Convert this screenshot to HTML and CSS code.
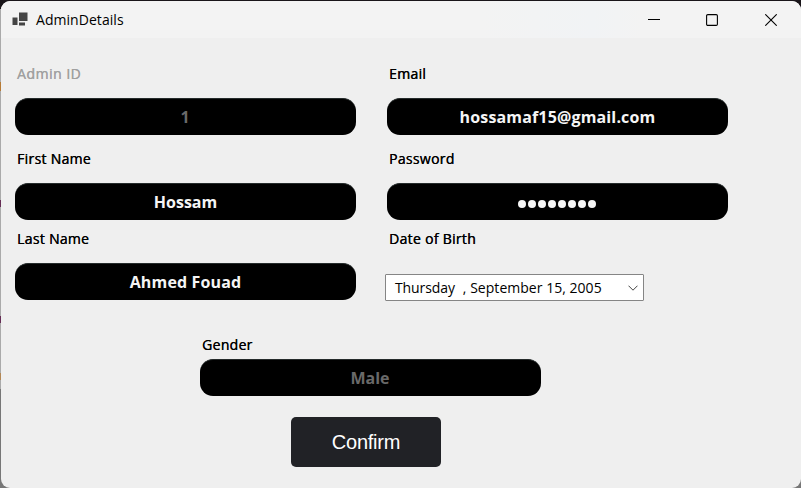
FILE: index.html
```html
<!DOCTYPE html>
<html lang="en">
<head>
<meta charset="utf-8">
<title>AdminDetails</title>
<link rel="stylesheet" href="styles.css">
</head>
<body>
<main class="window">
  <header class="titlebar">
    <svg class="app-icon" width="16" height="16" viewBox="0 0 16 16"><path d="M7 .5h8.500v8.500H7zM.5 5.500h5v7.500h-5zM7 10.500h6v3H7z" fill="#454545"/></svg>
    <span class="title">AdminDetails</span>
    <div class="controls">
      <svg width="12" height="12" viewBox="0 0 12 12"><path d="M0 5.500h12"/></svg>
      <svg width="12" height="12" viewBox="0 0 12 12"><rect x=".6" y=".6" width="10.800" height="10.800" rx="1.200"/></svg>
      <svg width="12" height="12" viewBox="0 0 12 12"><path d="M.3.3l11.400 11.400M11.700.3L.3 11.700"/></svg>
    </div>
  </header>
  <form class="form">
    <div class="columns">
      <div class="field"><span class="label muted">Admin ID</span><div class="input dim">1</div></div>
      <div class="field"><span class="label">Email</span><div class="input wide">hossamaf15@gmail.com</div></div>
      <div class="field"><span class="label">First Name</span><div class="input">Hossam</div></div>
      <div class="field"><span class="label">Password</span><div class="input dots"><i></i><i></i><i></i><i></i><i></i><i></i><i></i><i></i></div></div>
      <div class="field"><span class="label">Last Name</span><div class="input wide">Ahmed Fouad</div></div>
      <div class="field"><span class="label">Date of Birth</span>
        <div class="date"><span class="day">Thursday</span><span class="rest">, September 15, 2005</span>
          <svg width="10" height="6" viewBox="0 0 10 6"><path d="M.5.7L5 5.200 9.500.7"/></svg></div>
      </div>
    </div>
    <div class="field gender"><span class="label">Gender</span><div class="input dim">Male</div></div>
    <button class="confirm" type="button">Confirm</button>
  </form>
</main>
</body>
</html>
```
FILE: styles.css
```css
* { box-sizing: border-box; }
body {
  margin: 0;
  width: 801px;
  height: 488px;
  overflow: hidden;
  padding: 1px 0 0 1px;
  font-family: "Open Sans", "Noto Sans", sans-serif;
  background:
    linear-gradient(#191519, #191519) 0 0 / 801px 9px no-repeat,
    linear-gradient(#b77b36, #b77b36) 0 82px / 1px 9px no-repeat,
    linear-gradient(#652d55, #652d55) 0 200px / 1px 7px no-repeat,
    linear-gradient(#652d55, #652d55) 0 316px / 1px 7px no-repeat,
    linear-gradient(#b38755, #b38755) 0 373px / 1px 7px no-repeat,
    linear-gradient(#aaa 389px, #777 389px);
}
.window {
  height: 487px;
  border-radius: 9px;
  overflow: hidden;
  background: #efefef;
}
.titlebar {
  height: 37px;
  display: flex;
  align-items: center;
  padding: 0 24px 0 11px;
  background: linear-gradient(90deg, #f3f3f3 60%, #f1f3f5 74%, #f3f3f3 80%);
}
.title { margin-left: 8px; font-size: 14px; letter-spacing: .05px; color: #000; }
.controls { margin-left: auto; display: flex; gap: 47px; }
.controls svg { fill: none; stroke: #000; stroke-width: 1.1; }
.controls svg:nth-child(2) { margin-left: -1px; }
.form { padding: 26px 0 0 14px; color: #000; }
.columns { display: grid; grid-template-columns: 341px 341px; column-gap: 31px; grid-template-rows: 85px 80px 106px; }
.label {
  display: block;
  height: 34px;
  padding-left: 2px;
  font-size: 14px;
  line-height: 20px;
  letter-spacing: .3px;
  text-shadow: .3px 0 currentColor;
  white-space: nowrap;
}
.muted { color: #a0a0a0; letter-spacing: .5px; }
.input {
  height: 37px;
  display: flex;
  align-items: center;
  justify-content: center;
  border-radius: 13px;
  border-top: 1px solid #252b2b;
  background: #000;
  color: #f5f5f5;
  font-size: 16px;
  font-weight: 700;
}
.wide { letter-spacing: .15px; }
.dim { color: #696969; padding-right: 1px; }
.dots { gap: 2px; padding: 4px 2px 0 0; }
.dots i { width: 8px; height: 8px; border-radius: 50%; background: #f5f5f5; }
.date {
  width: 259px;
  height: 27px;
  margin: 11px 0 0 -2px;
  padding: 0 5px 0 9px;
  display: flex;
  align-items: center;
  border: 1px solid #858585;
  border-radius: 1px;
  background: #fff;
  font-size: 14px;
  white-space: nowrap;
}
.day { letter-spacing: -.1px; }
.rest { margin-left: 8px; letter-spacing: .03px; }
.date svg { margin-left: auto; fill: none; stroke: #444; }
.gender { width: 341px; margin-left: 185px; }
.gender .label { height: 24px; }
.confirm {
  display: block;
  width: 150px;
  height: 50px;
  margin: 21px 0 0 276px;
  padding: 0;
  border: 0;
  border-radius: 5px;
  background: #212226;
  color: #fff;
  font: 20px "Liberation Sans", sans-serif;
  letter-spacing: -.25px;
}
```
